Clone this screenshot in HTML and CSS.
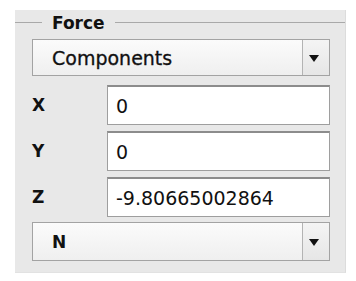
FILE: index.html
```html
<!DOCTYPE html>
<html lang="en">
<head>
  <meta charset="UTF-8">
  <title>Force</title>
  <link rel="stylesheet" href="styles.css">
</head>
<body>
  <div class="panel">
    <div class="group-title">
      <span class="rule rule-left"></span>
      <span class="legend">Force</span>
      <span class="rule"></span>
    </div>

    <div class="combo combo-top">
      <span class="combo-text">Components</span>
      <span class="combo-btn">
        <svg width="10" height="7" viewBox="0 0 10 7"><path d="M0 0 H10 L5 7 Z" fill="#111"/></svg>
      </span>
    </div>

    <div class="rows">
      <div class="field-row">
        <span class="label">X</span>
        <input class="field" type="text" value="0">
      </div>
      <div class="field-row">
        <span class="label">Y</span>
        <input class="field" type="text" value="0">
      </div>
      <div class="field-row">
        <span class="label">Z</span>
        <input class="field" type="text" value="-9.80665002864">
      </div>
    </div>

    <div class="combo combo-bottom">
      <span class="combo-text bold">N</span>
      <span class="combo-btn">
        <svg width="10" height="7" viewBox="0 0 10 7"><path d="M0 0 H10 L5 7 Z" fill="#111"/></svg>
      </span>
    </div>
  </div>
</body>
</html>
```

FILE: styles.css
```css
body {
  margin: 0;
  padding: 0;
  background-color: #fff;
  font-family: "DejaVu Sans", sans-serif;
  color: #111;
}

.panel {
  margin: 10px 0 0 15px;
  width: 331px;
  height: 263px;
  box-sizing: border-box;
  background-color: #e8e8e8;
  border-right: 1px solid #dcdcdc;
  border-bottom: 1px solid #e2e2e2;
  padding: 0 15px 0 17px;
}

.group-title {
  display: flex;
  align-items: center;
  height: 24px;
  margin: 0 -15px 0 -17px;
}

.rule {
  flex: 1;
  height: 1px;
  background-color: #a9a9a9;
}

.rule-left {
  flex: 0 0 27px;
}

.legend {
  font-size: 17px;
  font-weight: bold;
  padding: 2px 10px 0 10px;
  line-height: 18px;
}

.combo {
  display: flex;
  align-items: stretch;
  border: 1px solid #a3a3a3;
  background: linear-gradient(#fbfbfb, #efefef);
  box-sizing: border-box;
}

.combo-top {
  height: 37px;
  margin-top: 5px;
}

.combo-bottom {
  height: 39px;
  margin-top: 5px;
}

.combo-text {
  flex: 1;
  display: flex;
  align-items: center;
  padding-left: 19px;
  font-size: 19px;
  -webkit-text-stroke: 0.3px #111;
}

.combo-text.bold {
  font-weight: bold;
  font-size: 17px;
  -webkit-text-stroke: 0;
}

.combo-btn {
  width: 27px;
  border-left: 1px solid #b3b3b3;
  background: linear-gradient(#f4f4f4, #e6e6e6);
  display: flex;
  align-items: center;
  justify-content: center;
  padding: 2px 5px 0 0;
  box-sizing: border-box;
}

.rows {
  display: flex;
  flex-direction: column;
  gap: 6px;
  margin-top: 9px;
}

.field-row {
  display: flex;
  align-items: center;
  height: 40px;
}

.label {
  flex: 0 0 75px;
  font-size: 17px;
  font-weight: bold;
}

.field {
  flex: 1;
  min-width: 0;
  width: 0;
  height: 40px;
  box-sizing: border-box;
  margin: 0;
  border: 1px solid #9e9e9e;
  border-top: 2px solid #8c8c8c;
  background-color: #fff;
  padding: 0 0 0 8px;
  font-family: "DejaVu Sans", sans-serif;
  font-size: 19px;
  color: #111;
  outline: none;
}
```
